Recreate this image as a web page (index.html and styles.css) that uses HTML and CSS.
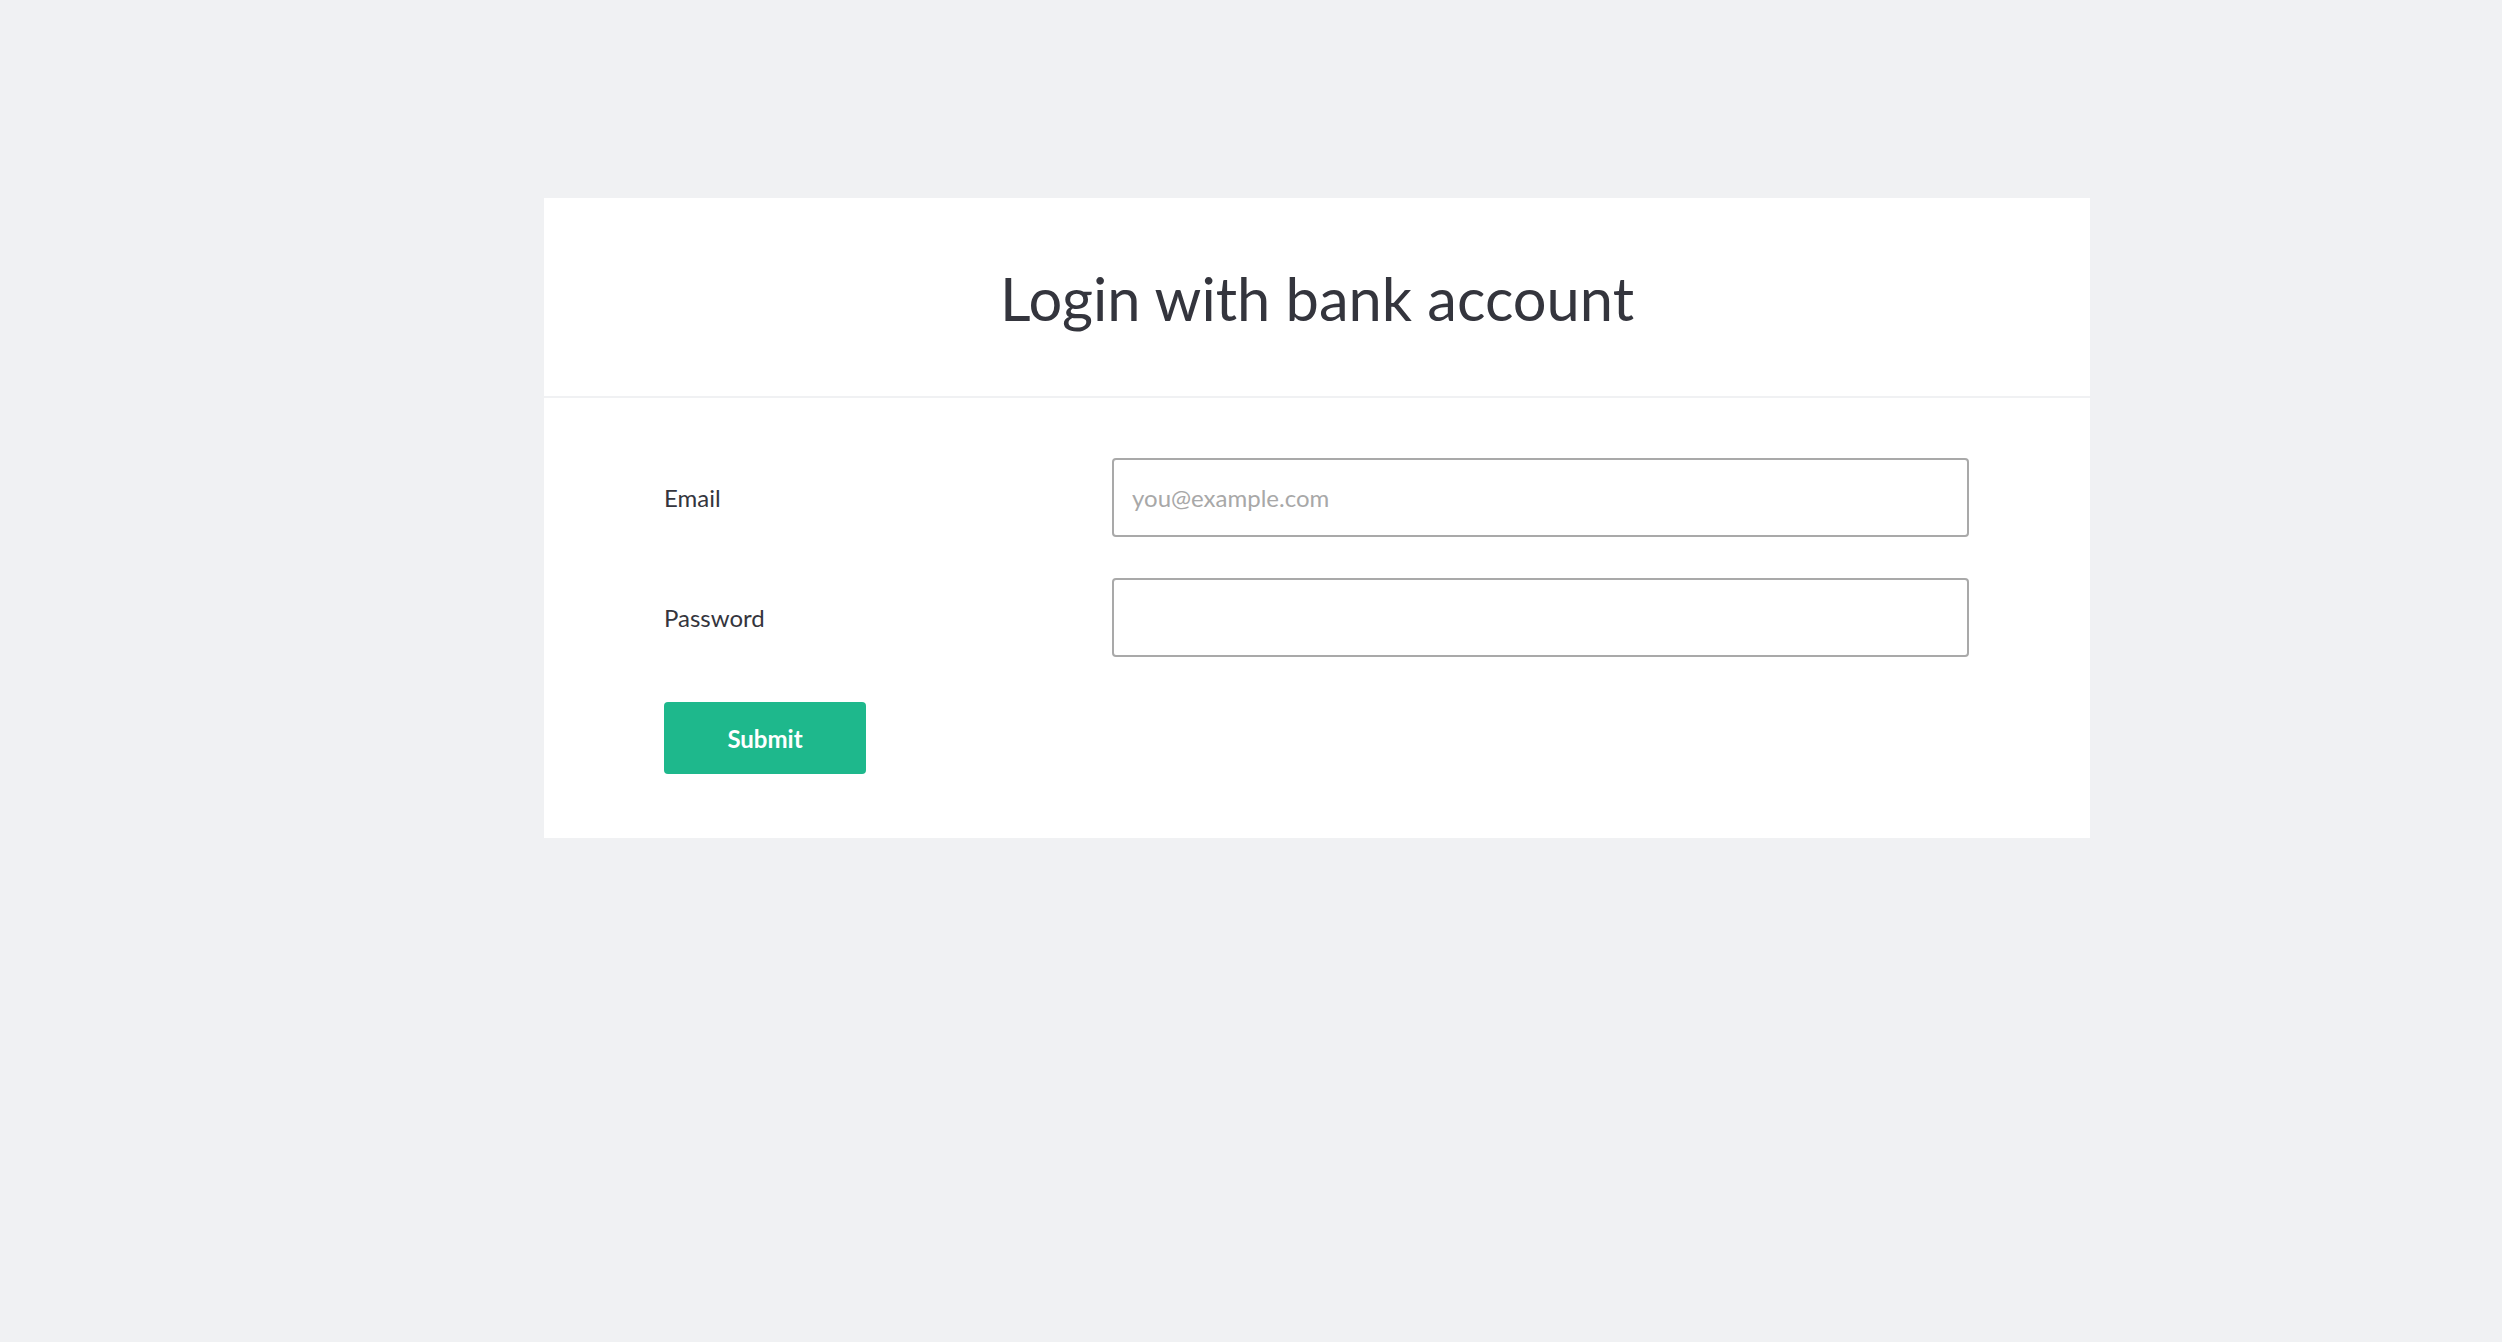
FILE: index.html
```html
<!DOCTYPE html>
<html lang="en">
<head>
<meta charset="utf-8">
<title>Login with bank account</title>
<link rel="stylesheet" href="styles.css">
</head>
<body>
<main class="page">
  <section class="card">
    <header class="card-header">
      <h1 class="title">Login with bank account</h1>
    </header>
    <form class="card-body">
      <div class="field">
        <label class="label" for="email">Email</label>
        <input class="input" id="email" type="email" placeholder="you@example.com">
      </div>
      <div class="field">
        <label class="label" for="password">Password</label>
        <input class="input" id="password" type="password">
      </div>
      <div class="actions">
        <button class="btn" type="button">Submit</button>
      </div>
    </form>
  </section>
</main>
</body>
</html>
```
FILE: styles.css
```css
html, body {
  margin: 0;
  padding: 0;
}
body {
  background: #f0f1f3;
  font-family: Lato, "Open Sans", "Liberation Sans", sans-serif;
  color: #34353d;
  min-height: 1342px;
}
.page {
  padding: 198px 412px 0 544px;
}
.card {
  background: #ffffff;
  display: flex;
  flex-direction: column;
}
.card-header {
  box-sizing: border-box;
  height: 200px;
  padding-top: 3px;
  border-bottom: 2px solid #f0f1f3;
  display: flex;
  align-items: center;
  justify-content: center;
}
.title {
  margin: 0;
  font-size: 59.6px;
  font-weight: 400;
  color: #34353d;
  line-height: 1;
}
.card-body {
  padding: 60px 121px 64px 120px;
  display: flex;
  flex-direction: column;
  gap: 41px;
}
.field {
  display: grid;
  grid-template-columns: 448px 1fr;
  align-items: center;
}
.label {
  font-size: 24px;
  color: #34353d;
}
.input {
  box-sizing: border-box;
  height: 79px;
  width: 100%;
  border: 2px solid #a9a9a9;
  border-radius: 4px;
  padding: 0 18px;
  font-family: Lato, "Open Sans", "Liberation Sans", sans-serif;
  font-size: 24px;
  color: #34353d;
  background: #fff;
  outline: none;
}
.input::placeholder {
  color: #a8a8a8;
}
.actions {
  display: flex;
  margin-top: 4px;
}
.btn {
  width: 202px;
  height: 72px;
  border: none;
  border-radius: 4px;
  background: #1eb88c;
  color: #ffffff;
  font-family: Lato, "Open Sans", "Liberation Sans", sans-serif;
  font-weight: 700;
  font-size: 24px;
  cursor: pointer;
}
```
